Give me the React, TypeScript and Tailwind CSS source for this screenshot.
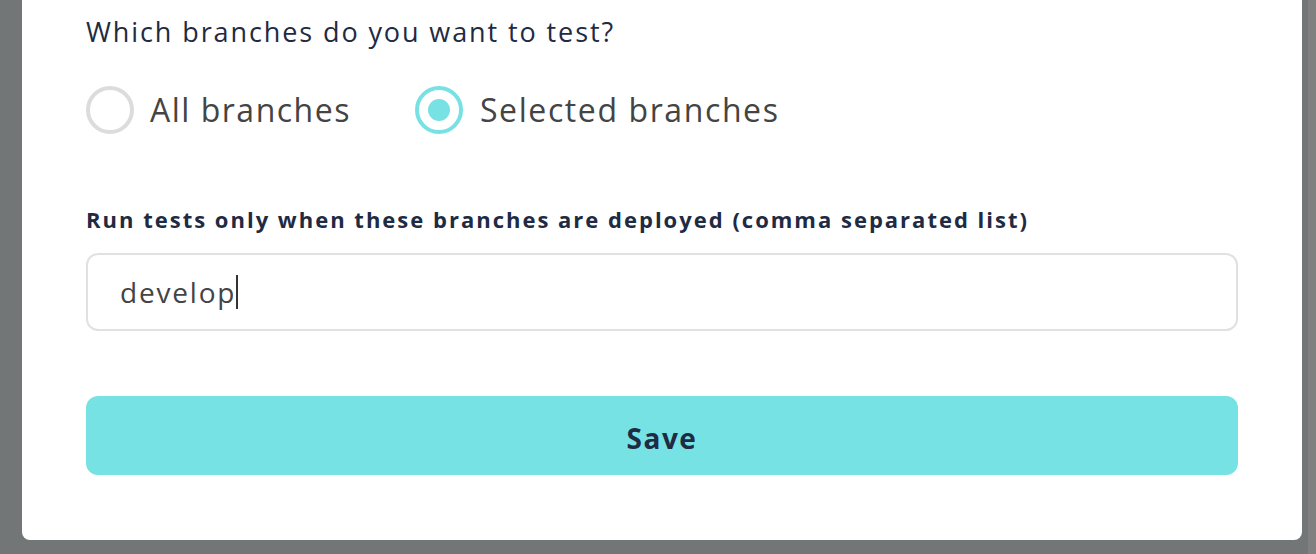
import React from "react";

export default function App() {
  return (
    <div
      className="flex h-[554px] w-full bg-[#737677]"
      style={{ fontFamily: "'Open Sans', 'Noto Sans', sans-serif" }}
    >
      <div className="ml-[22px] h-[540px] w-[1280px] rounded-b-[8px] bg-white px-[64px]">
        <div className="pt-[15px] text-[27px] leading-[34px] tracking-[1.9px] text-[#1e2b43]">
          <span>Which branches do you want to test?</span>
        </div>
        <div className="mt-[37px] flex items-center">
          <label className="flex items-center">
            <span className="h-[48px] w-[48px] rounded-full border-[4px] border-[#dcdcdc]" />
            <span className="ml-[16px] text-[32px] leading-[40px] tracking-[1.5px] text-[#444444]">All branches</span>
          </label>
          <label className="ml-[64px] flex items-center">
            <span className="flex h-[48px] w-[48px] items-center justify-center rounded-full border-[4px] border-[#77e1e4]">
              <span className="h-[22px] w-[22px] rounded-full bg-[#77e1e4]" />
            </span>
            <span className="ml-[17px] text-[32px] leading-[40px] tracking-[1.6px] text-[#444444]">Selected branches</span>
          </label>
        </div>
        <div className="mt-[70px] text-[22px] font-bold leading-[30px] tracking-[2px] text-[#1e2b43]">
          <span>Run tests only when these branches are deployed (comma separated list)</span>
        </div>
        <div className="mt-[19px] flex h-[78px] w-[1152px] items-center rounded-[12px] border-2 border-[#e1e1e1] px-[32px]">
          <span className="text-[28px] leading-[36px] tracking-[1.8px] text-[#444444]">develop</span>
          <span className="h-[34px] w-[2px] bg-[#333333]" />
        </div>
        <button className="mt-[65px] flex h-[79px] w-[1152px] items-center justify-center rounded-[12px] bg-[#77e2e4] pt-[5px] text-[28px] font-bold tracking-[1.5px] text-[#1e2b43]">
          Save
        </button>
      </div>
      <div className="ml-auto h-full w-[8px] bg-[#808080]" />
    </div>
  );
}
